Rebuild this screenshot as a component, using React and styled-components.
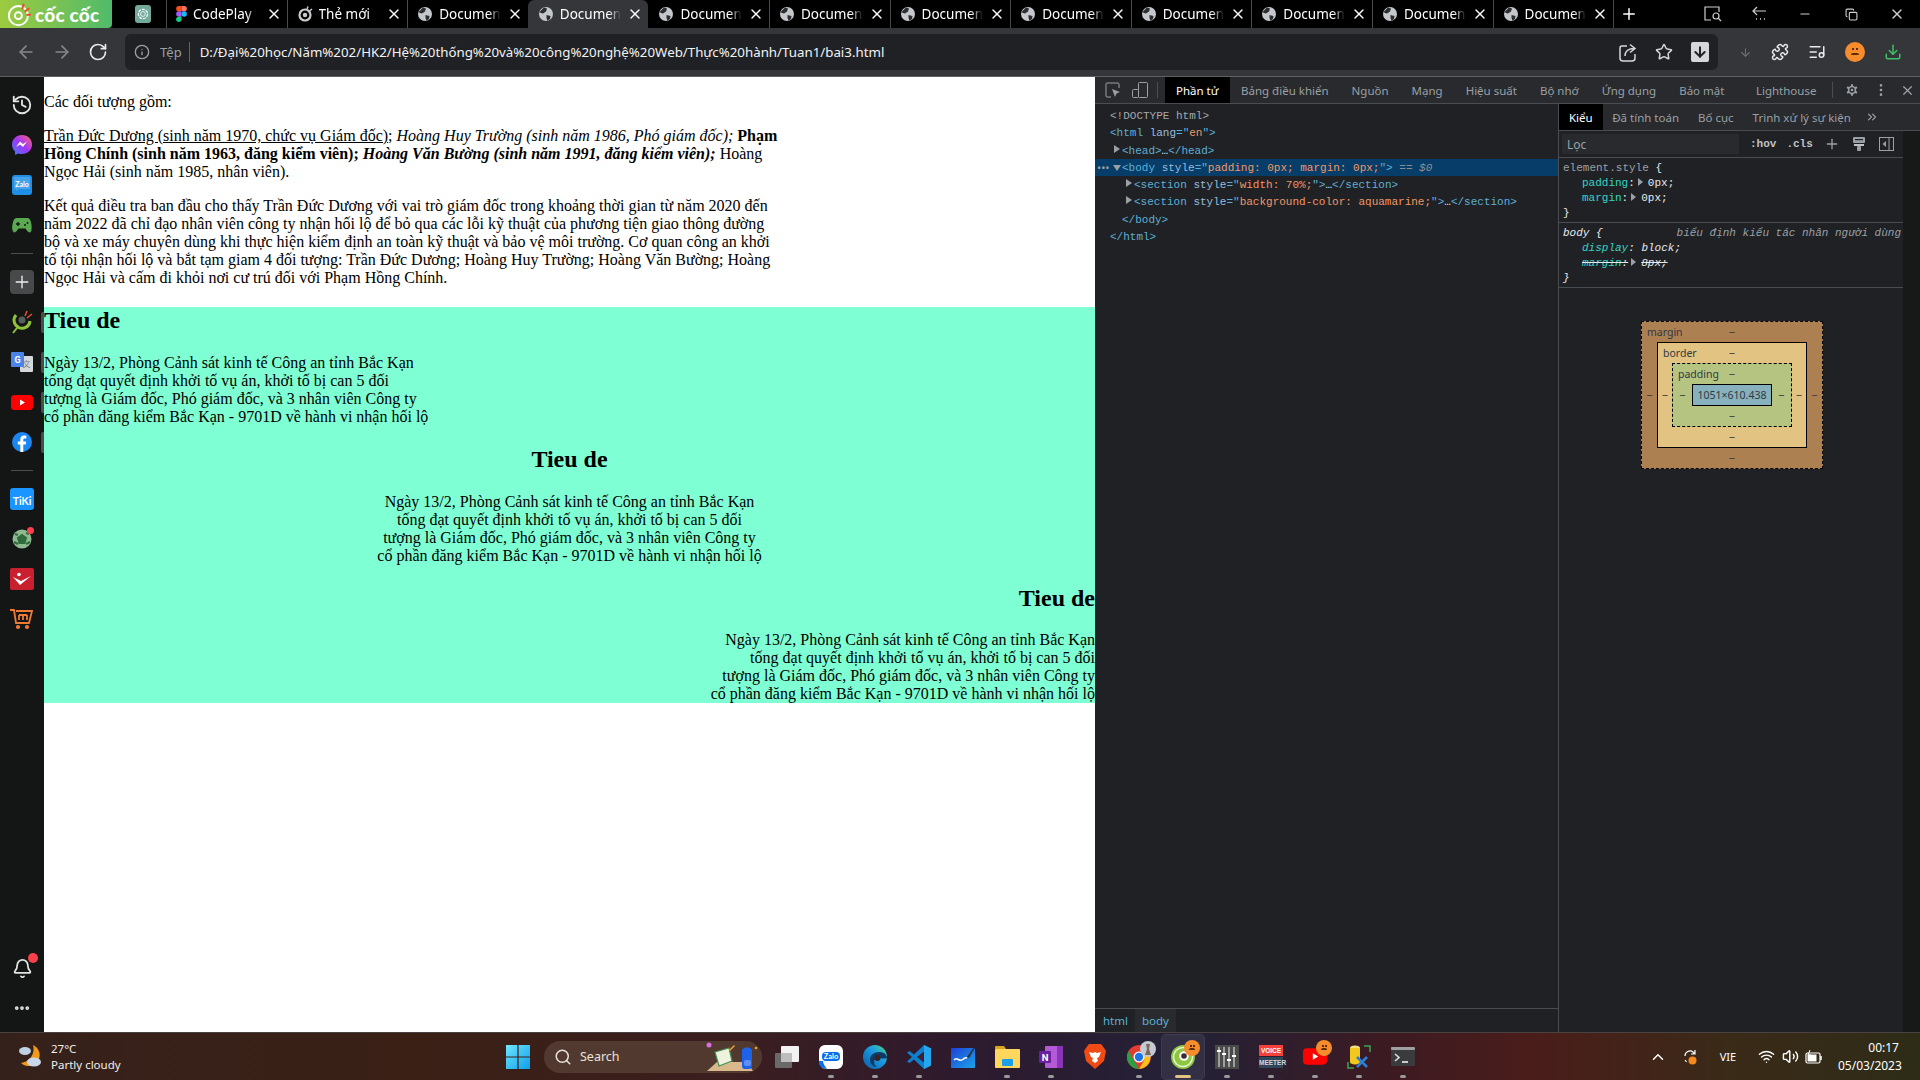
import React from 'react'
import styled, { createGlobalStyle } from 'styled-components'
import {
  ArrowLeft, ArrowRight, RotateCw, Info, Star, Puzzle, Settings, MoreVertical, X, Plus,
  History, Bell, MoreHorizontal, Search, ChevronUp, Wifi, Volume2, Minus, ChevronsRight,
  ArrowDown, Copy, ListMusic, Download,
} from 'lucide-react'

const GlobalStyle = createGlobalStyle`
  html, body { margin: 0; padding: 0; background: #000; overflow: hidden; }
  * { box-sizing: border-box; }
`

const UI_FONT = '"Noto Sans", "Open Sans", sans-serif'
const MONO_FONT = '"Liberation Mono", "DejaVu Sans Mono", monospace'

const Window = styled.div`
  width: 1920px;
  height: 1080px;
  display: flex;
  flex-direction: column;
  overflow: hidden;
  font-family: ${UI_FONT};
`

/* ---------- tab strip ---------- */
const TabStrip = styled.div`
  height: 28px;
  background: #000;
  display: flex;
  align-items: stretch;
  flex-shrink: 0;
`
const Brand = styled.div`
  width: 112px;
  background: linear-gradient(90deg, #9ccb3f 0%, #79c254 50%, #4fbb6b 100%);
  border-bottom-right-radius: 4px;
  display: flex;
  align-items: center;
  gap: 2px;
  padding-left: 7px;
  color: #fff;
  font-family: "Lato", sans-serif;
  font-weight: 900;
  font-size: 19px;
  letter-spacing: 0.2px;
`
const PinnedTab = styled.div`
  width: 54px;
  display: flex;
  align-items: center;
  justify-content: center;
  padding-left: 8px;
`
const TabItem = styled.div`
  width: 120.6px;
  display: flex;
  align-items: center;
  padding: 0 5px 0 9px;
  gap: 6px;
  color: #fff;
  font-size: 13.5px;
  position: relative;
  background: ${p => (p.$active ? '#35363a' : 'transparent')};
  border-radius: ${p => (p.$active ? '6px 6px 0 0' : '0')};
  border-left: 1px solid ${p => (p.$active || p.$afterActive ? 'transparent' : '#4a4a4a')};
  height: 28px;
`
const TabTitle = styled.span`
  flex: 1;
  white-space: nowrap;
  overflow: hidden;
  -webkit-mask-image: linear-gradient(90deg, #000 80%, transparent 100%);
  mask-image: linear-gradient(90deg, #000 80%, transparent 100%);
`
const NewTab = styled.div`
  width: 30px;
  border-left: 1px solid #4a4a4a;
  display: flex;
  align-items: center;
  justify-content: center;
  height: 28px;
  color: #fff;
`
const WindowControls = styled.div`
  margin-left: auto;
  display: flex;
  align-items: center;
  color: #cfcfcf;
`
const WinButton = styled.div`
  width: 46px;
  display: flex;
  justify-content: center;
`

/* ---------- toolbar ---------- */
const Toolbar = styled.div`
  height: 49px;
  background: #35363a;
  border-bottom: 1px solid #5f6063;
  display: flex;
  align-items: center;
  flex-shrink: 0;
`
const NavButton = styled.div`
  width: 36px;
  display: flex;
  justify-content: center;
  color: ${p => (p.$on ? '#e8eaed' : '#85878a')};
`
const NavGroup = styled.div`
  display: flex;
  padding-left: 8px;
  width: 125px;
`
const AddressBar = styled.div`
  width: 1593px;
  height: 36px;
  background: #202124;
  border-radius: 6px;
  display: flex;
  align-items: center;
  padding-left: 9px;
`
const SchemeLabel = styled.span`
  color: #9aa0a6;
  font-size: 13px;
  margin-left: 10px;
  padding-right: 7px;
  border-right: 1px solid #5f6368;
  line-height: 20px;
`
const Url = styled.span`
  color: #f1f3f4;
  font-size: 13.3px;
  margin-left: 10px;
  white-space: nowrap;
`
const BarActions = styled.div`
  margin-left: auto;
  display: flex;
  align-items: center;
  gap: 18px;
  padding-right: 9px;
  color: #d5d7da;
`
const SavedBox = styled.div`
  width: 18px;
  height: 20px;
  background: #d5d7da;
  border-radius: 2px;
  color: #202124;
  display: flex;
  align-items: center;
  justify-content: center;
`
const ToolActions = styled.div`
  display: flex;
  align-items: center;
  gap: 19px;
  margin-left: 21px;
  color: #e8eaed;
`
const Avatar = styled.div`
  width: ${p => (p.$small ? 16 : 20)}px;
  height: ${p => (p.$small ? 16 : 20)}px;
  border-radius: 50%;
  background: #f78c2c;
  position: relative;
  flex-shrink: 0;
  &::before {
    content: '';
    position: absolute;
    left: 35%;
    top: 32%;
    width: 2px;
    height: 2px;
    background: #5b2c06;
    box-shadow: ${p => (p.$small ? 3 : 4)}px 0 0 #5b2c06;
  }
  &::after {
    content: '';
    position: absolute;
    left: 30%;
    right: 30%;
    top: 56%;
    height: 2px;
    background: #5b2c06;
    border-radius: 2px 2px 0 0;
  }
`

/* ---------- main area ---------- */
const Main = styled.div`
  flex: 1;
  min-height: 0;
  display: flex;
`
const Sidebar = styled.div`
  width: 44px;
  background: #141616;
  display: flex;
  flex-direction: column;
  align-items: center;
  padding-top: 8px;
  flex-shrink: 0;
`
const SideSlot = styled.div`
  width: 44px;
  height: 40px;
  display: flex;
  align-items: center;
  justify-content: center;
  color: #e4e4e4;
  position: relative;
  &::after {
    content: '';
    display: ${p => (p.$open ? 'block' : 'none')};
    position: absolute;
    right: 0;
    top: 10px;
    width: 3px;
    height: 21px;
    background: #4a4c4d;
    border-radius: 2px 0 0 2px;
  }
`
const SideDivider = styled.div`
  width: 22px;
  height: 1px;
  background: #4b4d4e;
  margin: 8px 0;
`
const SideFooter = styled.div`
  margin-top: auto;
  padding-bottom: 4px;
`
const RedDot = styled.span`
  position: absolute;
  top: ${p => (p.$small ? 8 : 5)}px;
  right: ${p => (p.$small ? 10 : 6)}px;
  width: ${p => (p.$small ? 7 : 10)}px;
  height: ${p => (p.$small ? 7 : 10)}px;
  border-radius: 50%;
  background: #f9404b;
`
const AddSquare = styled.div`
  width: 24px;
  height: 24px;
  border-radius: 4px;
  background: #47494a;
  color: #eee;
  display: flex;
  align-items: center;
  justify-content: center;
`

/* ---------- the page being inspected ---------- */
const Page = styled.div`
  width: 1051px;
  background: #fff;
  color: #000;
  flex-shrink: 0;
  overflow: hidden;
  font-family: "Liberation Serif", "Times New Roman", serif;
  font-size: 16px;
  line-height: 18px;
  display: flow-root;
`
const NewsSection = styled.section`
  width: 70%;
`
const Para = styled.p`
  margin: 16px 0;
`
const AquaSection = styled.section`
  background-color: aquamarine;
`
const AlignedBlock = styled.div`
  text-align: ${p => p.$align};
`
const Heading = styled.h2`
  font-size: 24px;
  line-height: 27px;
  font-weight: 700;
  margin: 19.92px 0;
`

/* ---------- devtools ---------- */
const DevTools = styled.div`
  flex: 1;
  min-width: 0;
  background: #202124;
  display: flex;
  flex-direction: column;
`
const DevTabBar = styled.div`
  height: 27px;
  background: #292a2d;
  border-bottom: 1px solid #494c50;
  display: flex;
  align-items: stretch;
  flex-shrink: 0;
  color: #9aa0a6;
`
const DevTool = styled.div`
  width: ${p => p.$w}px;
  flex-shrink: 0;
  display: flex;
  align-items: center;
  justify-content: center;
`
const DevDivider = styled.div`
  width: 1px;
  height: 16px;
  flex-shrink: 0;
  background: #494c50;
  align-self: center;
  margin: ${p => p.$m || '0 7px 0 8px'};
`
const DevTab = styled.div`
  padding: 0 ${p => p.$pad || 12}px 0 ${p => p.$padLeft || p.$pad || 12}px;
  display: flex;
  align-items: center;
  font-size: 11.5px;
  white-space: nowrap;
  flex-shrink: 0;
  background: ${p => (p.$active ? '#000' : 'transparent')};
  color: ${p => (p.$active ? '#fff' : '#9aa0a6')};
`
const DevBody = styled.div`
  flex: 1;
  min-height: 0;
  display: flex;
`
const ElementsPane = styled.div`
  width: 464px;
  border-right: 1px solid #494c50;
  display: flex;
  flex-direction: column;
`
const DomTree = styled.div`
  flex: 1;
  padding-top: 3px;
  font-family: ${MONO_FONT};
  font-size: 11px;
`
const DomRow = styled.div`
  height: 17.3px;
  line-height: 19px;
  padding-left: ${p => p.$indent}px;
  white-space: pre;
  position: relative;
  color: #9aa0a6;
  background: ${p => (p.$selected ? '#073d69' : 'transparent')};
`
const Tag = styled.span`color: #5db0d7;`
const AttrName = styled.span`color: #9bbbdc;`
const AttrValue = styled.span`color: #f29766;`
const Doctype = styled.span`color: #a6a8ab;`
const Dim = styled.span`color: #8a8d91; font-style: italic;`
const Ellipsis = styled.span`color: #e8eaed;`
const Caret = styled.span`
  position: absolute;
  left: ${p => p.$left}px;
  top: ${p => (p.$open ? 6 : 3)}px;
  width: 0;
  height: 0;
  border-style: solid;
  border-color: transparent;
  ${p => (p.$open
    ? 'border-width: 6px 4px 0 4px; border-top-color: #9aa0a6;'
    : 'border-width: 4px 0 4px 6px; border-left-color: #9aa0a6;')}
`
const RowDots = styled.span`
  position: absolute;
  left: 2px;
  top: -1px;
  color: #9aa0a6;
  font-family: ${UI_FONT};
`
const Breadcrumbs = styled.div`
  height: 24px;
  border-top: 1px solid #494c50;
  display: flex;
  font-size: 11.5px;
  color: #5db0d7;
`
const Crumb = styled.div`
  padding: 0 7px 0 ${p => (p.$active ? 7 : 8)}px;
  display: flex;
  align-items: center;
  background: ${p => (p.$active ? '#292a2d' : 'transparent')};
`
const StylesPane = styled.div`
  flex: 1;
  min-width: 0;
  display: flex;
  flex-direction: column;
`
const StyleTabs = styled.div`
  height: 27px;
  background: #292a2d;
  border-bottom: 1px solid #494c50;
  display: flex;
  align-items: stretch;
  color: #9aa0a6;
  flex-shrink: 0;
`
const StylesBody = styled.div`
  flex: 1;
  display: flex;
  min-height: 0;
`
const StylesColumn = styled.div`
  width: 344px;
`
const ScrollTrack = styled.div`
  flex: 1;
  background: #171818;
`
const FilterRow = styled.div`
  height: 27px;
  border-bottom: 1px solid #494c50;
  display: flex;
  align-items: center;
  color: #9aa0a6;
  padding: 0 3px;
`
const FilterInput = styled.div`
  width: 177px;
  height: 20px;
  background: #292a2d;
  font-size: 12px;
  padding-left: 5px;
  display: flex;
  align-items: center;
`
const FilterFlag = styled.span`
  font-family: ${MONO_FONT};
  font-weight: 700;
  font-size: 11px;
  color: #c0c2c5;
  margin-left: ${p => p.$m}px;
`
const FilterIcon = styled.span`
  display: flex;
  margin-left: ${p => p.$m}px;
`
const RuleBlock = styled.div`
  height: 65px;
  border-bottom: 1px solid #494c50;
  padding: 3px 0 0 4px;
  font-family: ${MONO_FONT};
  font-size: 11px;
  line-height: 14.9px;
  color: #e8eaed;
  position: relative;
  font-style: ${p => (p.$italic ? 'italic' : 'normal')};
`
const Selector = styled.span`color: ${p => (p.$dim ? '#9aa0a6' : '#e8eaed')};`
const RuleLine = styled.div`
  padding-left: ${p => (p.$indent ? 19 : 0)}px;
  white-space: pre;
`
const PropName = styled.span`
  color: #35d4c7;
  text-decoration: ${p => (p.$struck ? 'line-through' : 'none')};
  text-decoration-color: #e8eaed;
`
const Struck = styled.span`text-decoration: line-through;`
const ValueCaret = styled.span`
  display: inline-block;
  width: 0;
  height: 0;
  margin: 0 5px 0 3px;
  border-style: solid;
  border-color: transparent;
  border-width: 4px 0 4px 5px;
  border-left-color: #9aa0a6;
`
const RuleOrigin = styled.span`
  position: absolute;
  right: 2px;
  top: 3px;
  color: #9aa0a6;
`
const BoxArea = styled.div`
  display: flex;
  padding: 33px 0 0 82px;
`
const BoxLayer = styled.div`
  position: relative;
  display: grid;
  grid-template-columns: ${p => p.$side}px 1fr ${p => p.$side}px;
  grid-template-rows: 20px 1fr 20px;
  place-items: center;
  width: ${p => p.$w}px;
  height: ${p => p.$h}px;
  background: ${p => p.$bg};
  border: 1px ${p => p.$line} #000;
  color: #303942;
  font-size: 10.5px;
`
const BoxLabel = styled.span`
  position: absolute;
  left: 5px;
  top: 3px;
`
const BoxContent = styled.div`
  width: 80px;
  height: 22px;
  background: #87b1bc;
  border: 1px solid #000;
  color: #303942;
  font-size: 10.5px;
  display: flex;
  align-items: center;
  justify-content: center;
`

/* ---------- taskbar ---------- */
const Taskbar = styled.div`
  height: 48px;
  flex-shrink: 0;
  display: flex;
  align-items: center;
  border-top: 1px solid #4a4240;
  background: linear-gradient(90deg, #35211b 0%, #3a2015 22%, #3b1e1f 38%, #2e1a2e 50%, #232137 62%, #3c1a22 72%, #4a1d1a 80%, #3a2a18 90%, #2d2c17 100%);
  color: #fff;
`
const Weather = styled.div`
  width: 496px;
  display: flex;
  align-items: center;
  padding-left: 18px;
  gap: 7px;
  font-size: 11.5px;
  line-height: 16px;
`
const WeatherText = styled.div`
  color: #f2efed;
`
const TaskSlot = styled.div`
  width: 44px;
  height: 46px;
  display: flex;
  align-items: center;
  justify-content: center;
  position: relative;
  border-radius: 5px;
  background: ${p => (p.$active ? 'rgba(255,255,255,0.07)' : 'transparent')};
  box-shadow: ${p => (p.$active ? 'inset 0 0 0 1px rgba(255,255,255,0.06)' : 'none')};
  &::after {
    content: '';
    display: ${p => (p.$running ? 'block' : 'none')};
    position: absolute;
    bottom: 2px;
    left: 50%;
    width: ${p => (p.$active ? 16 : 6)}px;
    height: 3px;
    margin-left: ${p => (p.$active ? -8 : -3)}px;
    border-radius: 2px;
    background: ${p => (p.$active ? '#e0c680' : '#9a9a9a')};
  }
`
const SearchPill = styled.div`
  width: 218px;
  height: 32px;
  margin: 0 3px 0 4px;
  border-radius: 16px;
  background: #52392f;
  display: flex;
  align-items: center;
  padding-left: 10px;
  gap: 8px;
  font-size: 12.5px;
  color: #e8e2de;
`
const PillArt = styled.div`
  margin-left: auto;
  margin-right: 3px;
  display: flex;
`
const Tray = styled.div`
  margin-left: auto;
  display: flex;
  align-items: center;
  padding-right: 21px;
`
const TrayCell = styled.div`
  width: ${p => p.$w}px;
  margin-left: ${p => p.$m || 0}px;
  display: flex;
  justify-content: center;
  font-size: 11px;
  color: #fff;
`
const Clock = styled.div`
  margin-left: 13px;
  width: 61px;
  text-align: right;
  font-size: 12px;
  line-height: 18px;
`
const FloatBadge = styled.span`
  position: absolute;
  top: 6px;
  right: 5px;
`

/* ---------- little drawings ---------- */
const CocCocMark = () => (
  <svg width="26" height="26" viewBox="0 0 24 24" fill="none">
    <circle cx="10.500" cy="13.500" r="8.800" stroke="#fff" strokeWidth="1.800" />
    <circle cx="10.500" cy="13.500" r="3.200" stroke="#fff" strokeWidth="1.800" />
    <path d="M14 7.500l1.500-5M16.500 10l4-3.500M18 13l4-.5" stroke="#ef4b30" strokeWidth="1.800" />
  </svg>
)
const GptIcon = () => (
  <svg width="16" height="18" viewBox="0 0 16 18">
    <rect width="16" height="18" rx="3" fill="#74aa9c" />
    <circle cx="8" cy="9" r="4.600" fill="none" stroke="#fff" strokeWidth="1.200" strokeDasharray="3 1" />
    <circle cx="8" cy="9" r="2.400" fill="none" stroke="#e8f3f0" strokeWidth="1" />
  </svg>
)
const FigmaIcon = () => (
  <svg width="11" height="16" viewBox="0 0 12 18">
    <path d="M6 0H3a3 3 0 000 6h3z" fill="#f24e1e" />
    <path d="M6 0h3a3 3 0 010 6H6z" fill="#ff7262" />
    <path d="M6 6H3a3 3 0 000 6h3z" fill="#a259ff" />
    <circle cx="9" cy="9" r="3" fill="#1abcfe" />
    <path d="M6 12H3a3 3 0 103 3z" fill="#0acf83" />
  </svg>
)
const NewTabIcon = () => (
  <svg width="16" height="16" viewBox="0 0 16 16" fill="none">
    <circle cx="8" cy="9" r="5.500" stroke="#c9cbce" strokeWidth="2.200" />
    <circle cx="8" cy="9" r="2.200" fill="#c9cbce" />
    <path d="M10 3l1-2.500M12.500 5l2.500-2" stroke="#c9cbce" strokeWidth="1.500" />
  </svg>
)
const GlobeIcon = () => (
  <svg width="16" height="16" viewBox="0 0 16 16">
    <circle cx="8" cy="8" r="7" fill="#c4c7cb" />
    <path d="M6 1.500l3 1-1 3-3 2-2-.5L1.500 6zM8.500 9l4 1-.5 3-2.500 1.800-1-2.800z" fill="#2c2d2f" />
  </svg>
)
const TabSearchIcon = () => (
  <svg width="18" height="16" viewBox="0 0 18 16" fill="none" stroke="#cfcfcf" strokeWidth="1.200">
    <path d="M7 14H1V1h14v5" />
    <circle cx="12" cy="10" r="3" />
    <path d="M14 12l3 3" />
  </svg>
)
const BackDotsIcon = () => (
  <svg width="16" height="16" viewBox="0 0 16 16" fill="none" stroke="#cfcfcf" strokeWidth="1.200">
    <path d="M15 5H2M6 1L2 5l4 4" />
    <path d="M5 13h1M9 13h1M13 13h1" strokeWidth="1.500" />
  </svg>
)
const ShareBoxIcon = () => (
  <svg width="18" height="19" viewBox="0 0 18 19" fill="none" stroke="#d5d7da" strokeWidth="1.500">
    <path d="M8 3H3a2 2 0 00-2 2v10a3 3 0 003 3h9a3 3 0 003-3v-4" />
    <path d="M6 13c0-5 4-7.500 9-7.500M11 1.500l5 4-5 4" />
  </svg>
)
const MessengerIcon = () => (
  <svg width="20" height="20" viewBox="0 0 20 20">
    <defs>
      <linearGradient id="msg" x1="0" y1="1" x2="1" y2="0">
        <stop offset="0" stopColor="#3b82f6" />
        <stop offset="0.5" stopColor="#a334fa" />
        <stop offset="1" stopColor="#ff6968" />
      </linearGradient>
    </defs>
    <path d="M10 0C4.400 0 0 4.100 0 9.500c0 2.900 1.200 5.300 3.100 7V20l3-1.600c1.200.4 2.500.6 3.900.6 5.600 0 10-4.100 10-9.500S15.600 0 10 0z" fill="url(#msg)" />
    <path d="M4 12l4-5.500 3 2.500 4-2.500-4 5.500-3-2.500z" fill="#fff" />
  </svg>
)
const ZaloSquare = () => (
  <svg width="20" height="20" viewBox="0 0 20 20">
    <rect width="20" height="20" rx="3" fill="#1f8fe5" />
    <path d="M2 2h16v12H7l-3 2v-2H2z" fill="#fff" opacity="0.18" />
    <text x="10" y="11.500" textAnchor="middle" fontSize="7" fontWeight="700" fontFamily="Lato, sans-serif" fill="#fff">Zalo</text>
  </svg>
)
const GamepadIcon = () => (
  <svg width="20" height="15" viewBox="0 0 20 15">
    <path d="M5 0h10c2.500 0 3.800 2 4.300 5.500.5 3.500.7 7.500-1 8.700-1.500 1-3.300-1.500-4.800-3.700H6.500C5 12.700 3.200 15.200 1.700 14.200 0 13-.3 9 .7 5.500 1.200 2 2.500 0 5 0z" fill="#5aa84f" />
    <path d="M4 6h4M6 4v4" stroke="#141616" strokeWidth="1.300" />
    <circle cx="13" cy="7" r="1" fill="#141616" />
    <circle cx="15.500" cy="5" r="1" fill="#141616" />
  </svg>
)
const CocCocSide = () => (
  <svg width="24" height="24" viewBox="0 0 24 24" fill="none">
    <path d="M6 5a8 8 0 1014 6" stroke="#8fc33a" strokeWidth="3" />
    <circle cx="12" cy="10" r="3.500" fill="#55605a" />
    <path d="M3 23l4-5" stroke="#8fc33a" strokeWidth="2" />
    <path d="M15 6l2-5M17 8l5-4" stroke="#e5502e" strokeWidth="1.500" />
  </svg>
)
const TranslateIcon = () => (
  <svg width="22" height="20" viewBox="0 0 22 20">
    <rect x="9" y="4" width="13" height="16" rx="1" fill="#d5d8db" />
    <text x="15.500" y="15" textAnchor="middle" fontSize="8" fontFamily="Noto Sans CJK SC, sans-serif" fill="#7a7f85">文</text>
    <rect width="13" height="15" rx="1" fill="#4a84e8" />
    <text x="6.500" y="11" textAnchor="middle" fontSize="9" fontWeight="700" fontFamily="Roboto, sans-serif" fill="#fff">G</text>
  </svg>
)
const YoutubeIcon = ({ w = 22, h = 15 }) => (
  <svg width={w} height={h} viewBox="0 0 22 15">
    <rect width="22" height="15" rx="3.500" fill="#f00" />
    <path d="M9 4.500l5 3-5 3z" fill="#fff" />
  </svg>
)
const FacebookIcon = () => (
  <svg width="20" height="20" viewBox="0 0 20 20">
    <circle cx="10" cy="10" r="10" fill="#1b86f2" />
    <path d="M11.300 20v-7.500h2.500l.4-3h-2.900V7.800c0-.9.3-1.400 1.500-1.400h1.500V3.700c-.5-.1-1.300-.2-2.200-.2-2.300 0-3.800 1.400-3.800 3.900v2.100H5.800v3h2.500V20z" fill="#fff" />
  </svg>
)
const TikiIcon = () => (
  <svg width="24" height="22" viewBox="0 0 24 22">
    <rect width="24" height="22" rx="3" fill="#1a94ff" />
    <text x="12" y="17" textAnchor="middle" fontSize="10.500" fontWeight="700" fontFamily="Lato, sans-serif" fill="#fff">TiKi</text>
  </svg>
)
const BallIcon = () => (
  <svg width="20" height="20" viewBox="0 0 20 20">
    <circle cx="10" cy="10" r="9.500" fill="#8fb98f" />
    <path d="M10 6l4 3-1.500 5h-5L6 9zM3 5l3 1M17 5l-3-1M2 13l4 2M18 13l-4 2" stroke="#2f6b3c" strokeWidth="2" fill="#2f6b3c" />
  </svg>
)
const CheckBadge = () => (
  <svg width="24" height="22" viewBox="0 0 24 22">
    <rect width="24" height="22" rx="2" fill="#c8202e" />
    <path d="M3 9l7 8 11-9-10 5z" fill="#fff" />
    <circle cx="9" cy="6.500" r="1.800" fill="#fff" />
  </svg>
)
const CartIcon = () => (
  <svg width="24" height="22" viewBox="0 0 24 22" fill="none" stroke="#f07a32" strokeWidth="1.800">
    <path d="M0 2h4l2 13h13l3-12H6" />
    <path d="M9 12V7M13 12V7M17 12V7M9 7h8" />
    <circle cx="8" cy="19" r="1.200" fill="#f07a32" />
    <circle cx="17" cy="19" r="1.200" fill="#f07a32" />
  </svg>
)
const WeatherIcon = () => (
  <svg width="26" height="26" viewBox="0 0 26 26">
    <path d="M15 1a11 11 0 11-12 18A14 14 0 0015 1z" fill="#f09a1a" />
    <ellipse cx="7" cy="7" rx="6" ry="4" fill="#bcd0e6" />
    <ellipse cx="16" cy="18" rx="7" ry="4.500" fill="#c9d8ea" />
  </svg>
)
const WinLogo = () => (
  <svg width="24" height="24" viewBox="0 0 24 24">
    <defs>
      <linearGradient id="win" x1="0" y1="0" x2="1" y2="1">
        <stop offset="0" stopColor="#6fe6ff" />
        <stop offset="1" stopColor="#0d9fea" />
      </linearGradient>
    </defs>
    <path d="M0 0h11.400v11.400H0zM12.600 0H24v11.400H12.600zM0 12.600h11.400V24H0zM12.600 12.600H24V24H12.600z" fill="url(#win)" />
  </svg>
)
const SearchArt = () => (
  <svg width="56" height="30" viewBox="0 0 56 30">
    <path d="M4 29l10-9h30l6 9z" fill="#d9b98b" />
    <path d="M12 10l14-4 3 13-13 5z" fill="#eef2dc" stroke="#3f8f55" strokeWidth="1.200" />
    <path d="M26 8l5-5 1 1-5 5z" fill="#f2a02e" />
    <path d="M39 8a6 6 0 0110 0v16a3 3 0 01-3 3h-5a3 3 0 01-2-3z" fill="#1d63e8" />
    <rect x="41" y="18" width="7" height="6" rx="2" fill="#5d8ff5" />
    <circle cx="6" cy="3" r="2.500" fill="#d86ee2" />
    <circle cx="53" cy="6" r="1.300" fill="#f2a02e" />
  </svg>
)
const TaskView = () => (
  <svg width="24" height="22" viewBox="0 0 24 22">
    <rect x="0" y="7" width="17" height="15" rx="1" fill="#6a6a6a" />
    <rect x="6" y="0" width="18" height="16" rx="1" fill="#f2f2f2" />
    <rect x="6" y="7" width="11" height="9" fill="#bdbdbd" />
  </svg>
)
const ZaloBubble = () => (
  <svg width="24" height="24" viewBox="0 0 24 24">
    <path d="M6 0h12a6 6 0 016 6v12a6 6 0 01-6 6H8L3 23 2 19a6 6 0 01-2-4V6a6 6 0 016-6z" fill="#fff" />
    <path d="M0 16a6 6 0 004 7l4 1c-2-3-4-5-4-8z" fill="#0a6fe8" />
    <rect x="3" y="7" width="18" height="9" rx="4" fill="#0a6fe8" />
    <text x="12" y="14" textAnchor="middle" fontSize="7.500" fontWeight="700" fontFamily="Lato, sans-serif" fill="#fff">Zalo</text>
  </svg>
)
const EdgeIcon = () => (
  <svg width="24" height="24" viewBox="0 0 24 24">
    <defs>
      <linearGradient id="edge" x1="0" y1="1" x2="1" y2="0">
        <stop offset="0" stopColor="#0c59a4" />
        <stop offset="0.6" stopColor="#1b9de2" />
        <stop offset="1" stopColor="#52d17c" />
      </linearGradient>
    </defs>
    <circle cx="12" cy="12" r="12" fill="url(#edge)" />
    <path d="M24 13c0-4-4-6-8-6-5 0-9 3-9 8 0 4 3 7 7 7-2-1-3-3-3-5 0-3 3-5 6-4 2 .5 4 1 7 0z" fill="#0e3a66" />
    <ellipse cx="14.500" cy="13" rx="3" ry="3" fill="#3c2028" />
  </svg>
)
const VsCodeIcon = () => (
  <svg width="24" height="24" viewBox="0 0 24 24">
    <path d="M17 0l7 3.500v17L17 24 7 14.500 2.500 18 0 16.500 5 12 0 7.500 2.500 6 7 9.500z" fill="#0e7fcc" />
    <path d="M17 6.500L10 12l7 5.500z" fill="#3c2130" />
    <path d="M17 0l7 3.500v17L17 24z" fill="#25a6ee" />
  </svg>
)
const WhiteboardIcon = () => (
  <svg width="24" height="22" viewBox="0 0 24 22">
    <defs>
      <linearGradient id="wb" x1="0" y1="0" x2="1" y2="1">
        <stop offset="0" stopColor="#1e3fd8" />
        <stop offset="1" stopColor="#1aa5e8" />
      </linearGradient>
    </defs>
    <rect y="2" width="24" height="20" rx="1" fill="url(#wb)" />
    <path d="M3 14c3-4 5 2 8 0s3-3 5-2" stroke="#fff" strokeWidth="1.500" fill="none" />
    <path d="M16 11l7-10 1 1-6 10z" fill="#2b3240" />
  </svg>
)
const FolderIcon = () => (
  <svg width="25" height="23" viewBox="0 0 25 23">
    <path d="M0 2a1 1 0 011-1h8l2 3H0z" fill="#d9a520" />
    <rect y="4" width="25" height="19" rx="1" fill="#ffd75e" />
    <rect x="7" y="14" width="11" height="7" rx="1" fill="#1aa0e8" />
  </svg>
)
const OneNoteIcon = () => (
  <svg width="24" height="22" viewBox="0 0 24 22">
    <rect x="6" width="18" height="22" rx="1" fill="#b45ad6" />
    <path d="M18 0h6v22h-6z" fill="#8a34b8" />
    <rect y="5" width="12" height="12" rx="1" fill="#6a1fa0" />
    <text x="6" y="14.500" textAnchor="middle" fontSize="9.500" fontWeight="700" fontFamily="Roboto, sans-serif" fill="#fff">N</text>
  </svg>
)
const BraveIcon = () => (
  <svg width="22" height="25" viewBox="0 0 22 25">
    <path d="M5 0h12l2 2.500L22 7l-2 10-9 8-9-8L0 7l3-4.500z" fill="#f04a15" />
    <path d="M5 8l4 1 2-1 2 1 4-1-2 5-2 1 1 3-3 2-3-2 1-3-2-1z" fill="#fff" />
  </svg>
)
const ChromeIcon = () => (
  <svg width="24" height="24" viewBox="0 0 24 24">
    <circle cx="12" cy="12" r="12" fill="#e33b2e" />
    <path d="M12 24A12 12 0 011.600 6L7 15.500l5 8.500z" fill="#2c9f45" />
    <path d="M12 24l5.500-9.500L12 7h10.400A12 12 0 0112 24z" fill="#f8c11c" />
    <circle cx="12" cy="12" r="5.500" fill="#fff" />
    <circle cx="12" cy="12" r="4.200" fill="#1a73e8" />
  </svg>
)
const ProfileThumb = () => (
  <svg width="16" height="16" viewBox="0 0 16 16">
    <circle cx="8" cy="8" r="8" fill="#c5c9d3" />
    <path d="M6 3h4l-1 5 2 6H5l2-6z" fill="#7a6a55" />
  </svg>
)
const CocCocTask = () => (
  <svg width="24" height="24" viewBox="0 0 24 24" fill="none">
    <circle cx="12" cy="12" r="12" fill="#8dc63f" />
    <circle cx="12" cy="12" r="9.500" stroke="#e8f3d2" strokeWidth="1.500" />
    <circle cx="13" cy="11" r="3.800" stroke="#fff" strokeWidth="2" fill="#3b2a33" />
  </svg>
)
const MixerIcon = () => (
  <svg width="24" height="24" viewBox="0 0 24 24">
    <rect width="24" height="24" fill="#4a4a4a" />
    <path d="M4 2v20M9 2v20M14 2v20M19 2v20" stroke="#d8d8d8" strokeWidth="1.200" />
    <path d="M2 6h4M7 9h4M12 15h4M17 11h4" stroke="#fff" strokeWidth="2" />
  </svg>
)
const VoiceCaption = styled.div`
  width: 24px;
  font-family: "Liberation Sans", sans-serif;
  font-weight: 700;
  font-size: 6.5px;
  line-height: 11px;
  text-align: center;
`
const VoiceTop = styled.div`background: #f4413c; color: #fff;`
const VoiceBottom = styled.div`background: #30475a; color: #cfd6da; margin-top: 1px;`
const DbToolIcon = () => (
  <svg width="24" height="24" viewBox="0 0 24 24" fill="none">
    <ellipse cx="8" cy="3" rx="5" ry="2.500" fill="#f0e080" />
    <path d="M3 3v14c0 1.500 2 2.500 5 2.500s5-1 5-2.500V3z" fill="#f2c81e" />
    <path d="M1 17v6h6M17 1h6v6" stroke="#3fa34d" strokeWidth="1.500" />
    <path d="M10 12l10 10M20 12L10 22" stroke="#2b7fd6" strokeWidth="2.500" />
  </svg>
)
const TerminalIcon = () => (
  <svg width="24" height="19" viewBox="0 0 24 19" fill="none">
    <rect width="24" height="19" rx="1.500" fill="#3a3b3c" />
    <rect width="24" height="3" rx="1" fill="#a0a0a0" />
    <path d="M4 7l4 3.500L4 14" stroke="#ddd" strokeWidth="1.600" />
    <path d="M11 15h6" stroke="#eee" strokeWidth="1.600" />
  </svg>
)
const SyncIcon = () => (
  <svg width="18" height="18" viewBox="0 0 18 18" fill="none">
    <path d="M4 8a5 5 0 018-4l2 2M14 2v4h-4M4 12l1.500 2" stroke="#fff" strokeWidth="1.200" />
    <circle cx="11.500" cy="12.500" r="4" fill="#f28a1e" />
  </svg>
)
const BatteryIcon = () => (
  <svg width="18" height="16" viewBox="0 0 18 16" fill="none">
    <rect x="1" y="4" width="14" height="10" rx="1.500" stroke="#fff" strokeWidth="1.200" />
    <rect x="2.500" y="5.500" width="9" height="7" fill="#fff" />
    <path d="M16 7v4" stroke="#fff" strokeWidth="1.500" />
    <path d="M5 1l-2 5h3l-2 5" stroke="#fff" strokeWidth="1" />
  </svg>
)
const PaintIcon = () => (
  <svg width="14" height="16" viewBox="0 0 14 16" fill="none">
    <rect x="1" y="1" width="12" height="6" rx="1" fill="#9aa0a6" />
    <rect x="3" y="3" width="8" height="1.200" fill="#202124" />
    <rect x="2" y="8" width="10" height="2" fill="#c0c2c5" />
    <rect x="5" y="10" width="4" height="5" rx="1" fill="#9aa0a6" />
  </svg>
)
const DockIcon = () => (
  <svg width="15" height="14" viewBox="0 0 15 14" fill="none">
    <rect x="0.500" y="0.500" width="14" height="13" stroke="#9aa0a6" />
    <path d="M10 1v12" stroke="#9aa0a6" />
    <path d="M7 4v6L3.500 7z" fill="#9aa0a6" />
  </svg>
)
const DeviceIcon = () => (
  <svg width="16" height="16" viewBox="0 0 16 16" fill="none" stroke="#9aa0a6">
    <rect x="6.500" y="0.500" width="9" height="15" rx="1" />
    <rect x="0.500" y="7.500" width="6" height="8" rx="1" fill="#292a2d" />
  </svg>
)
const InspectIcon = () => (
  <svg width="16" height="16" viewBox="0 0 16 16" fill="none">
    <path d="M6 15H2a1 1 0 01-1-1V2a1 1 0 011-1h11a1 1 0 011 1v4" stroke="#9aa0a6" />
    <path d="M7 7l8 3-3.500 1.500L10 15z" fill="#9aa0a6" />
  </svg>
)

/* ---------- data ---------- */
const DOC_TABS = Array.from({ length: 10 }, (_, i) => i)

const SIDE_TOP = [
  { key: 'history', icon: <History size={22} strokeWidth={2} /> },
  { key: 'messenger', icon: <MessengerIcon /> },
  { key: 'zalo', icon: <ZaloSquare /> },
  { key: 'game', icon: <GamepadIcon /> },
]
const SIDE_MIDDLE = [
  { key: 'add', icon: <AddSquare><Plus size={20} strokeWidth={1.6} /></AddSquare> },
  { key: 'coccoc', icon: <CocCocSide />, open: true },
  { key: 'translate', icon: <TranslateIcon />, open: true },
  { key: 'youtube', icon: <YoutubeIcon />, open: true },
  { key: 'facebook', icon: <FacebookIcon />, open: true },
]
const SIDE_BOTTOM = [
  { key: 'tiki', icon: <TikiIcon /> },
  { key: 'ball', icon: <BallIcon />, dot: true },
  { key: 'check', icon: <CheckBadge /> },
  { key: 'cart', icon: <CartIcon /> },
]

const STYLE_TABS = [
  { label: 'Kiểu', active: true },
  { label: 'Đã tính toán' },
  { label: 'Bố cục' },
  { label: 'Trình xử lý sự kiện' },
]
const DEV_TABS = ['Bảng điều khiển', 'Nguồn', 'Mạng', 'Hiệu suất', 'Bộ nhớ', 'Ứng dụng', 'Bảo mật']

const TASK_APPS = [
  { key: 'view', icon: <TaskView /> },
  { key: 'zalo', icon: <ZaloBubble />, running: true },
  { key: 'edge', icon: <EdgeIcon />, running: true },
  { key: 'code', icon: <VsCodeIcon />, running: true },
  { key: 'board', icon: <WhiteboardIcon /> },
  { key: 'folder', icon: <FolderIcon />, running: true },
  { key: 'note', icon: <OneNoteIcon />, running: true },
  { key: 'brave', icon: <BraveIcon /> },
  { key: 'chrome', icon: <ChromeIcon />, running: true, badge: <ProfileThumb /> },
  { key: 'coccoc', icon: <CocCocTask />, running: true, active: true, badge: <Avatar $small /> },
  { key: 'mixer', icon: <MixerIcon />, running: true },
  {
    key: 'voice',
    running: true,
    icon: (
      <VoiceCaption>
        <VoiceTop>VOICE</VoiceTop>
        <VoiceBottom>MEETER</VoiceBottom>
      </VoiceCaption>
    ),
  },
  { key: 'yt', icon: <YoutubeIcon w={24} h={17} />, running: true, badge: <Avatar $small /> },
  { key: 'db', icon: <DbToolIcon />, running: true },
  { key: 'term', icon: <TerminalIcon />, running: true },
]

const PARA_LINES = [
  'Ngày 13/2, Phòng Cảnh sát kinh tế Công an tỉnh Bắc Kạn',
  'tống đạt quyết định khởi tố vụ án, khởi tố bị can 5 đối',
  'tượng là Giám đốc, Phó giám đốc, và 3 nhân viên Công ty',
  'cổ phần đăng kiểm Bắc Kạn - 9701D về hành vi nhận hối lộ',
]

const Article = ({ align }) => (
  <AlignedBlock $align={align}>
    <Heading>Tieu de</Heading>
    <Para>
      {PARA_LINES.map(line => (
        <React.Fragment key={line}>{line}<br /></React.Fragment>
      ))}
    </Para>
  </AlignedBlock>
)

const Box = ({ label, children, ...rest }) => (
  <BoxLayer {...rest}>
    {label && <BoxLabel>{label}</BoxLabel>}
    <span />
    <span>‒</span>
    <span />
    <span>‒</span>
    {children}
    <span>‒</span>
    <span />
    <span>‒</span>
    <span />
  </BoxLayer>
)

export default function App() {
  return (
    <Window>
      <GlobalStyle />
      <TabStrip>
        <Brand><CocCocMark />cốc cốc</Brand>
        <PinnedTab><GptIcon /></PinnedTab>
        <TabItem>
          <FigmaIcon /><TabTitle>CodePlay</TabTitle><X size={16} />
        </TabItem>
        <TabItem>
          <NewTabIcon /><TabTitle>Thẻ mới</TabTitle><X size={16} />
        </TabItem>
        {DOC_TABS.map(i => (
          <TabItem key={i} $active={i === 1} $afterActive={i === 2}>
            <GlobeIcon /><TabTitle>Document</TabTitle><X size={16} />
          </TabItem>
        ))}
        <NewTab><Plus size={18} /></NewTab>
        <WindowControls>
          <WinButton><TabSearchIcon /></WinButton>
          <WinButton><BackDotsIcon /></WinButton>
          <WinButton><Minus size={14} /></WinButton>
          <WinButton><Copy size={13} /></WinButton>
          <WinButton><X size={16} /></WinButton>
        </WindowControls>
      </TabStrip>

      <Toolbar>
        <NavGroup>
          <NavButton><ArrowLeft size={20} /></NavButton>
          <NavButton><ArrowRight size={20} /></NavButton>
          <NavButton $on><RotateCw size={20} /></NavButton>
        </NavGroup>
        <AddressBar>
          <Info size={16} color="#9aa0a6" />
          <SchemeLabel>Tệp</SchemeLabel>
          <Url>D:/Đại%20học/Năm%202/HK2/Hệ%20thống%20và%20công%20nghệ%20Web/Thực%20hành/Tuan1/bai3.html</Url>
          <BarActions>
            <ShareBoxIcon />
            <Star size={18} />
            <SavedBox><ArrowDown size={16} strokeWidth={3} /></SavedBox>
          </BarActions>
        </AddressBar>
        <ToolActions>
          <ArrowDown size={13} color="#6d6f72" />
          <Puzzle size={18} />
          <ListMusic size={18} />
          <Avatar />
          <Download size={18} color="#3fbf66" />
        </ToolActions>
      </Toolbar>

      <Main>
        <Sidebar>
          {SIDE_TOP.map(s => <SideSlot key={s.key}>{s.icon}</SideSlot>)}
          <SideDivider />
          {SIDE_MIDDLE.map(s => <SideSlot key={s.key} $open={s.open}>{s.icon}</SideSlot>)}
          <SideDivider />
          {SIDE_BOTTOM.map(s => (
            <SideSlot key={s.key}>{s.icon}{s.dot && <RedDot $small />}</SideSlot>
          ))}
          <SideFooter>
            <SideSlot><Bell size={21} /><RedDot /></SideSlot>
            <SideSlot><MoreHorizontal size={18} strokeWidth={3} /></SideSlot>
          </SideFooter>
        </Sidebar>

        <Page>
          <NewsSection>
            <Para>Các đối tượng gồm:</Para>
            <Para>
              <u>Trần Đức Dương (sinh năm 1970, chức vụ Giám đốc)</u>;{' '}
              <i>Hoàng Huy Trường (sinh năm 1986, Phó giám đốc);</i>{' '}
              <b>Phạm Hồng Chính (sinh năm 1963, đăng kiểm viên); <i>Hoàng Văn Bường (sinh năm 1991, đăng kiểm viên);</i></b>{' '}
              Hoàng Ngọc Hải (sinh năm 1985, nhân viên).
            </Para>
            <Para>
              Kết quả điều tra ban đầu cho thấy Trần Đức Dương với vai trò giám đốc trong khoảng thời gian từ năm 2020 đến
              năm 2022 đã chỉ đạo nhân viên công ty nhận hối lộ để bỏ qua các lỗi kỹ thuật của phương tiện giao thông đường
              bộ và xe máy chuyên dùng khi thực hiện kiểm định an toàn kỹ thuật và bảo vệ môi trường. Cơ quan công an khởi
              tố tội nhận hối lộ và bắt tạm giam 4 đối tượng: Trần Đức Dương; Hoàng Huy Trường; Hoàng Văn Bường; Hoàng
              Ngọc Hải và cấm đi khỏi nơi cư trú đối với Phạm Hồng Chính.
            </Para>
          </NewsSection>
          <AquaSection>
            <Article align="left" />
            <Article align="center" />
            <Article align="right" />
          </AquaSection>
        </Page>

        <DevTools>
          <DevTabBar>
            <DevTool $w={36}><InspectIcon /></DevTool>
            <DevTool $w={18}><DeviceIcon /></DevTool>
            <DevDivider />
            <DevTab $active $pad={11}>Phần tử</DevTab>
            {DEV_TABS.map(t => <DevTab key={t} $pad={11.5}>{t}</DevTab>)}
            <DevTab $padLeft={20} $pad={16}>Lighthouse</DevTab>
            <DevDivider $m="0" />
            <DevTool $w={38}><Settings size={16} fill="#9aa0a6" color="#292a2d" /></DevTool>
            <DevTool $w={20}><MoreVertical size={16} /></DevTool>
            <DevTool $w={32}><X size={15} /></DevTool>
          </DevTabBar>
          <DevBody>
            <ElementsPane>
              <DomTree>
                <DomRow $indent={15}><Doctype>{'<!DOCTYPE html>'}</Doctype></DomRow>
                <DomRow $indent={15}>
                  <Tag>{'<html'}</Tag> <AttrName>lang</AttrName><Tag>=</Tag><Tag>"</Tag><AttrValue>en</AttrValue><Tag>"&gt;</Tag>
                </DomRow>
                <DomRow $indent={27}>
                  <Caret $left={19} /><Tag>{'<head>'}</Tag><Ellipsis>…</Ellipsis><Tag>{'</head>'}</Tag>
                </DomRow>
                <DomRow $indent={27} $selected>
                  <RowDots>•••</RowDots><Caret $left={18} $open />
                  <Tag>{'<body'}</Tag> <AttrName>style</AttrName><Tag>="</Tag><AttrValue>padding: 0px; margin: 0px;</AttrValue><Tag>"&gt;</Tag>
                  <Dim> == $0</Dim>
                </DomRow>
                <DomRow $indent={39}>
                  <Caret $left={31} /><Tag>{'<section'}</Tag> <AttrName>style</AttrName><Tag>="</Tag><AttrValue>width: 70%;</AttrValue><Tag>"&gt;</Tag>
                  <Ellipsis>…</Ellipsis><Tag>{'</section>'}</Tag>
                </DomRow>
                <DomRow $indent={39}>
                  <Caret $left={31} /><Tag>{'<section'}</Tag> <AttrName>style</AttrName><Tag>="</Tag><AttrValue>background-color: aquamarine;</AttrValue><Tag>"&gt;</Tag>
                  <Ellipsis>…</Ellipsis><Tag>{'</section>'}</Tag>
                </DomRow>
                <DomRow $indent={27}><Tag>{'</body>'}</Tag></DomRow>
                <DomRow $indent={15}><Tag>{'</html>'}</Tag></DomRow>
              </DomTree>
              <Breadcrumbs>
                <Crumb>html</Crumb>
                <Crumb $active>body</Crumb>
              </Breadcrumbs>
            </ElementsPane>
            <StylesPane>
              <StyleTabs>
                {STYLE_TABS.map(t => (
                  <DevTab key={t.label} $active={t.active} $pad={t.active ? 10 : 9.5}>{t.label}</DevTab>
                ))}
                <DevTool $w={24}><ChevronsRight size={14} /></DevTool>
              </StyleTabs>
              <StylesBody>
                <StylesColumn>
                  <FilterRow>
                    <FilterInput>Lọc</FilterInput>
                    <FilterFlag $m={11}>:hov</FilterFlag>
                    <FilterFlag $m={10}>.cls</FilterFlag>
                    <FilterIcon $m={11}><Plus size={16} /></FilterIcon>
                    <FilterIcon $m={12}><PaintIcon /></FilterIcon>
                    <FilterIcon $m={13}><DockIcon /></FilterIcon>
                  </FilterRow>
                  <RuleBlock>
                    <RuleLine><Selector $dim>element.style</Selector> {'{'}</RuleLine>
                    <RuleLine $indent><PropName>padding</PropName>:<ValueCaret />0px;</RuleLine>
                    <RuleLine $indent><PropName>margin</PropName>:<ValueCaret />0px;</RuleLine>
                    <RuleLine>{'}'}</RuleLine>
                  </RuleBlock>
                  <RuleBlock $italic>
                    <RuleOrigin>biểu định kiểu tác nhân người dùng</RuleOrigin>
                    <RuleLine><Selector>body</Selector> {'{'}</RuleLine>
                    <RuleLine $indent><PropName>display</PropName>: block;</RuleLine>
                    <RuleLine $indent><Struck><PropName $struck>margin</PropName>:<ValueCaret />8px;</Struck></RuleLine>
                    <RuleLine>{'}'}</RuleLine>
                  </RuleBlock>
                  <BoxArea>
                    <Box label="margin" $w={182} $h={148} $side={15} $bg="#ad8052" $line="dashed">
                      <Box label="border" $w={150} $h={106} $side={14} $bg="#e3c381" $line="solid">
                        <Box label="padding" $w={120} $h={64} $side={19} $bg="#b6c482" $line="dashed">
                          <BoxContent>1051×610.438</BoxContent>
                        </Box>
                      </Box>
                    </Box>
                  </BoxArea>
                </StylesColumn>
                <ScrollTrack />
              </StylesBody>
            </StylesPane>
          </DevBody>
        </DevTools>
      </Main>

      <Taskbar>
        <Weather>
          <WeatherIcon />
          <WeatherText>27°C<br />Partly cloudy</WeatherText>
        </Weather>
        <TaskSlot><WinLogo /></TaskSlot>
        <SearchPill>
          <Search size={18} />
          Search
          <PillArt><SearchArt /></PillArt>
        </SearchPill>
        {TASK_APPS.map(a => (
          <TaskSlot key={a.key} $running={a.running} $active={a.active}>
            {a.icon}
            {a.badge && <FloatBadge>{a.badge}</FloatBadge>}
          </TaskSlot>
        ))}
        <Tray>
          <TrayCell $w={32}><ChevronUp size={18} /></TrayCell>
          <TrayCell $w={32}><SyncIcon /></TrayCell>
          <TrayCell $w={44}>VIE</TrayCell>
          <TrayCell $w={24} $m={4}><Wifi size={17} /></TrayCell>
          <TrayCell $w={25}><Volume2 size={17} /></TrayCell>
          <TrayCell $w={22}><BatteryIcon /></TrayCell>
          <Clock>00:17<br />05/03/2023</Clock>
        </Tray>
      </Taskbar>
    </Window>
  )
}
